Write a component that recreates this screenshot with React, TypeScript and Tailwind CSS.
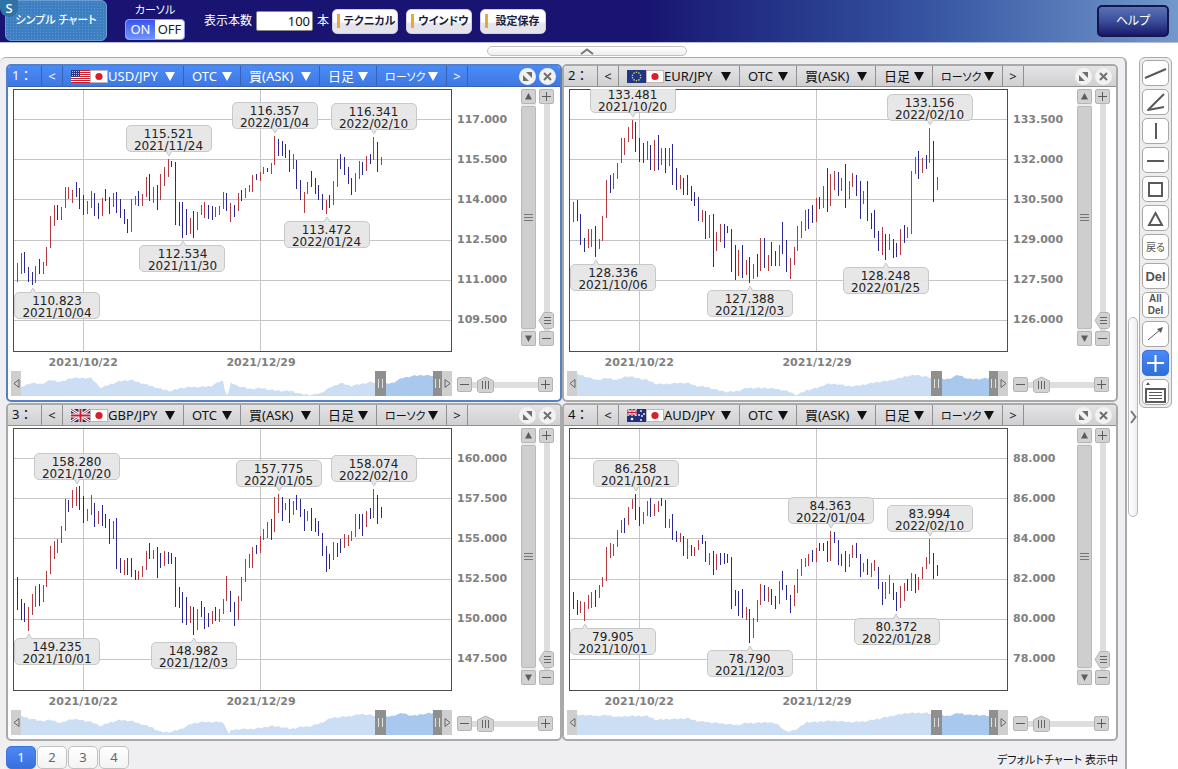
import { useState, type ReactNode } from "react";

type Candle = { up: boolean; top: number; bottom: number };
type Mark = { i: number; price: string; date: string; below?: boolean };

type Chart = {
  id: number;
  pair: string;
  flag: ReactNode;
  prices: string[];
  candles: Candle[];
  marks: Mark[];
  history: number[];
  dip?: number;
};

const PLOT_W = 439;
const PLOT_H = 263;
const GRID_Y = [30, 70, 110, 151, 191, 231];
const GRID_X = [70, 247];

// r = 陽線, b = 陰線。値は 1/3px 単位の高値・安値
function parse(src: string, origin: number): Candle[] {
  return src
    .trim()
    .split(/\s+/)
    .map((s) => {
      const [top, bottom] = s.slice(1).split("-").map(Number);
      return {
        up: s[0] === "r",
        top: Math.round((top - origin) / 3),
        bottom: Math.round((bottom - origin) / 3),
      };
    });
}

const candleX = (i: number) => Math.round(4 + i * 3.675);

const USD = `
r535-590 r503-568 b500-565 b547-592 b562-600 r542-595 b523-568 r532-568 r485-543 r392-490
r361-423 b361-405 r367-405 r307-370 r307-343 r314-354 b290-337 b310-373 b330-390 r349-387
r319-370 b325-393 b355-402 r338-392 b311-348 b336-386 r325-367 b322-385 b342-400 b371-418
b401-445 r343-442 r332-360 b319-362 r328-363 r277-336 b266-349 r305-355 b301-376 r268-346
r247-303 r223-276 b227-245 b232-420 b350-423 b352-460 b373-450 r398-447 b377-459 r380-436
r361-391 r350-398 b359-402 b362-404 r367-397 r364-391 r322-372 b325-378 r355-411 b361-397
r325-378 b314-348 r308-338 r301-320 r271-320 b268-286 r262-288 r247-268 b248-261 r235-267
r154-241 b163-214 b169-213 b178-220 b196-260 r208-252 b224-312 b286-344 r322-385 r292-328
b259-307 b280-328 b301-346 b328-376 r344-388 b331-370 r289-361 r223-307 b208-253 b217-271
b247-298 b280-330 r265-320 r229-283 b232-271 r214-259 b208-238 r157-226 b170-262 r217-241`;

const EUR = `
r352-411 b346-408 b388-480 b460-501 r433-490 r433-485 b424-516 r463-492 r392-468 r286-400
b269-325 r265-312 r235-283 r160-235 r160-210 r127-171 r106-163 b112-202 b160-230 b175-235
r169-226 b181-255 r166-259 b149-256 r188-241 b190-264 r190-244 b178-300 b248-315 r269-313
b280-330 b271-330 b304-349 b322-364 b337-408 r376-411 b379-462 r389-459 b386-546 r440-498
r416-471 b416-489 b422-445 b433-561 b481-586 r496-574 b481-580 r526-571 b517-594 r538-583
b508-577 r458-559 b458-550 r511-558 b472-543 b499-543 r479-543 b412-508 b466-561 r520-583
r485-540 r424-498 r407-460 r376-438 b371-432 b361-415 r340-412 b337-373 r302-370 b250-381
r268-364 r257-316 b262-333 r278-319 b238-370 r289-343 r265-307 b269-333 b289-403 r319-358
b289-409 b385-433 b376-459 b439-498 r427-511 b448-526 r446-495 b463-519 b475-517 r433-509
b421-475 r427-460 r259-448 r217-268 b199-283 r220-265 b211-253 r130-235 b169-352 r275-316`;

const GBP = `
b532-630 b598-661 b610-667 r622-694 r583-645 r559-622 b553-618 r556-606 r514-562 r439-522
r424-478 r418-460 r379-429 r298-393 b301-336 r269-323 r260-318 b259-330 b287-370 r328-364
r284-346 b308-381 r334-372 b314-378 b343-385 b358-432 r364-417 b355-508 b475-520 r481-526
b475-526 b475-531 b511-541 r514-541 r499-530 r454-511 b428-478 r451-478 b442-535 b460-504
r454-498 b455-492 b460-493 b472-621 b562-625 b577-670 b590-676 r619-670 b620-706 r628-690
b604-652 b620-687 b640-681 r632-672 b620-664 r628-666 r596-643 r529-603 b574-636 b607-678
r589-661 r532-604 r478-546 r463-504 r442-504 b436-462 r409-460 r386-421 r367-414 b358-420
r290-397 r283-339 b292-363 r308-330 b298-370 r304-346 b286-330 b298-352 b328-394 r334-363
b325-394 b355-397 b364-409 b400-468 b439-516 b463-508 r427-481 b430-472 b418-460 r401-444
r406-438 r394-424 r343-412 b343-388 b343-408 r334-382 b325-358 r268-355 b286-373 b322-355`;

const AUD = `
b577-628 b601-645 r604-640 r607-663 r586-628 r577-625 b571-621 r556-595 r532-562 r442-544
r428-474 r433-468 r391-441 r361-399 b355-400 r322-376 r298-327 b281-361 b322-378 r337-373
r302-348 b293-352 r313-349 r304-336 b293-319 b301-384 r358-385 b343-421 b394-426 r400-426
b409-469 r418-478 b436-469 r442-469 r421-451 b406-432 b422-487 r460-495 b454-525 r463-511
b460-495 b460-492 b463-490 b472-628 b571-619 b574-649 b568-655 r622-660 b628-730 r655-714
r601-667 r553-615 b556-603 r562-606 b568-615 b589-628 r544-613 b512-571 b556-600 b586-640
r556-619 r508-579 r478-528 r475-502 r463-499 b451-486 r443-487 b430-454 b430-454 b424-486
r394-483 b397-430 b421-495 b463-499 b454-517 r463-502 r436-475 b430-475 b463-532 r490-517
b478-526 r490-531 r479-513 b502-567 b547-616 r547-597 r526-583 b550-601 b577-633 r559-625
r549-603 b538-573 r520-573 b523-579 r532-571 r502-537 r472-508 r418-493 b460-538 b496-528`;

/* ---------- 国旗 ---------- */

const UsFlag = () => (
  <svg width="19" height="13" viewBox="0 0 19 13" aria-hidden="true">
    <rect width="19" height="13" fill="#fff" />
    {[0, 2, 4, 6, 8, 10, 12].map((y) => (
      <rect key={y} y={y} width="19" height="1" fill="#c8202f" />
    ))}
    <rect width="9" height="7" fill="#2b3a78" />
    {[1, 3, 5].map((y) =>
      [1, 3, 5, 7].map((x) => (
        <rect key={`${x}${y}`} x={x} y={y} width="1" height="1" fill="#b9c0dc" />
      ))
    )}
  </svg>
);

const EuFlag = () => (
  <svg width="19" height="13" viewBox="0 0 19 13" aria-hidden="true">
    <rect width="19" height="13" fill="#1f3683" />
    {Array.from({ length: 10 }, (_, i) => (
      <circle
        key={i}
        cx={9.5 + 4.2 * Math.sin((i * Math.PI) / 5)}
        cy={6.5 - 4.2 * Math.cos((i * Math.PI) / 5)}
        r="0.8"
        fill="#e8dc6a"
      />
    ))}
  </svg>
);

const Union = () => (
  <>
    <rect width="19" height="13" fill="#28306e" />
    <path d="M0 0L19 13M19 0L0 13" stroke="#fff" strokeWidth="3" />
    <path d="M0 0L19 13M19 0L0 13" stroke="#c8202f" strokeWidth="1" />
    <path d="M9.5 0V13M0 6.5H19" stroke="#fff" strokeWidth="4" />
    <path d="M9.5 0V13M0 6.5H19" stroke="#c8202f" strokeWidth="2" />
  </>
);

const GbFlag = () => (
  <svg width="19" height="13" viewBox="0 0 19 13" aria-hidden="true">
    <Union />
  </svg>
);

const AuFlag = () => (
  <svg width="19" height="13" viewBox="0 0 19 13" aria-hidden="true">
    <rect width="19" height="13" fill="#20307c" />
    <svg width="10" height="7" viewBox="0 0 19 13" preserveAspectRatio="none">
      <Union />
    </svg>
    <circle cx="5" cy="10" r="1.3" fill="#fff" />
    {[
      [14, 2],
      [12, 6],
      [17, 5],
      [14, 11],
      [15, 7],
    ].map(([x, y]) => (
      <circle key={`${x}-${y}`} cx={x} cy={y} r="0.9" fill="#fff" />
    ))}
  </svg>
);

const JpFlag = () => (
  <svg width="18" height="13" viewBox="0 0 18 13" aria-hidden="true">
    <rect x="0.5" y="0.5" width="17" height="12" fill="#fff" stroke="#c4b4b4" />
    <circle cx="9" cy="6.5" r="3.6" fill="#d81f2a" />
  </svg>
);

const CHARTS: Chart[] = [
  {
    id: 1,
    pair: "USD/JPY",
    flag: <UsFlag />,
    prices: ["117.000", "115.500", "114.000", "112.500", "111.000", "109.500"],
    candles: parse(USD, 12),
    marks: [
      { i: 4, price: "110.823", date: "2021/10/04", below: true },
      { i: 41, price: "115.521", date: "2021/11/24" },
      { i: 45, price: "112.534", date: "2021/11/30", below: true },
      { i: 70, price: "116.357", date: "2022/01/04" },
      { i: 84, price: "113.472", date: "2022/01/24", below: true },
      { i: 97, price: "116.341", date: "2022/02/10" },
    ],
    history: [
      16, 12, 13, 9, 11, 7, 7, 7, 17, 13, 10, 9, 12, 15, 18, 20, 17, 16, 16, 15, 10, 12, 16, 18,
      17, 19, 20, 20, 23, 24, 22, 16, 12, 15, 13, 11, 13, 12, 7, 5, 4, 5,
    ],
    dip: 206,
  },
  {
    id: 2,
    pair: "EUR/JPY",
    flag: <EuFlag />,
    prices: ["133.500", "132.000", "130.500", "129.000", "127.500", "126.000"],
    candles: parse(EUR, 12),
    marks: [
      { i: 6, price: "128.336", date: "2021/10/06", below: true },
      { i: 16, price: "133.481", date: "2021/10/20" },
      { i: 48, price: "127.388", date: "2021/12/03", below: true },
      { i: 85, price: "128.248", date: "2022/01/25", below: true },
      { i: 97, price: "133.156", date: "2022/02/10" },
    ],
    history: [
      3, 6, 9, 7, 9, 5, 7, 9, 13, 13, 12, 12, 15, 16, 19, 21, 20, 17, 17, 17, 18, 20, 24, 19, 17,
      13, 13, 15, 15, 13, 11, 10, 8, 5, 4, 6, 8, 8, 4, 8, 8, 7,
    ],
  },
  {
    id: 3,
    pair: "GBP/JPY",
    flag: <GbFlag />,
    prices: ["160.000", "157.500", "155.000", "152.500", "150.000", "147.500"],
    candles: parse(GBP, 84),
    marks: [
      { i: 3, price: "149.235", date: "2021/10/01", below: true },
      { i: 16, price: "158.280", date: "2021/10/20" },
      { i: 48, price: "148.982", date: "2021/12/03", below: true },
      { i: 71, price: "157.775", date: "2022/01/05" },
      { i: 97, price: "158.074", date: "2022/02/10" },
    ],
    history: [
      6, 9, 11, 10, 13, 9, 10, 12, 16, 12, 10, 11, 14, 17, 22, 22, 19, 14, 12, 12, 12, 20, 19, 19,
      18, 16, 17, 19, 17, 16, 13, 8, 7, 6, 4, 5, 7, 6, 3, 6, 4, 3,
    ],
    dip: 208,
  },
  {
    id: 4,
    pair: "AUD/JPY",
    flag: <AuFlag />,
    prices: ["88.000", "86.000", "84.000", "82.000", "80.000", "78.000"],
    candles: parse(AUD, 84),
    marks: [
      { i: 3, price: "79.905", date: "2021/10/01", below: true },
      { i: 17, price: "86.258", date: "2021/10/21" },
      { i: 48, price: "78.790", date: "2021/12/03", below: true },
      { i: 70, price: "84.363", date: "2022/01/04" },
      { i: 88, price: "80.372", date: "2022/01/28", below: true },
      { i: 97, price: "83.994", date: "2022/02/10" },
    ],
    history: [
      5, 5, 6, 5, 7, 6, 6, 6, 10, 9, 9, 8, 11, 12, 13, 14, 15, 13, 13, 12, 14, 22, 19, 12, 12, 11,
      11, 12, 12, 11, 9, 7, 5, 3, 3, 3, 5, 6, 3, 5, 5, 6,
    ],
  },
];

function areaPoints(history: number[], from: number, to: number, dip?: number) {
  const pts = [`0,25`];
  for (let x = from; x <= to; x += 2) {
    const k = Math.min(history.length - 2, Math.floor(x / 10));
    const t = x / 10 - k;
    let y = history[k] * (1 - t) + history[k + 1] * t;
    y += (((x * 13) % 7) - 3) / 4;
    if (dip && Math.abs(x - dip) < 3) y = 24 - Math.abs(x - dip) * 2;
    pts.push(`${x - from},${y.toFixed(1)}`);
  }
  pts.push(`${to - from},25`);
  return pts.join(" ");
}

function Plot({ chart }: { chart: Chart }) {
  return (
    <div className="relative h-[263px] overflow-hidden bg-white">
      <svg
        className="block h-full w-full"
        viewBox={`0 0 ${PLOT_W} ${PLOT_H}`}
        preserveAspectRatio="none"
        shapeRendering="crispEdges"
        aria-hidden="true"
      >
        {GRID_Y.map((y) => (
          <rect key={y} y={y} width={PLOT_W} height="1" fill="#c6c6c6" />
        ))}
        {GRID_X.map((x) => (
          <rect key={x} x={x} width="1" height={PLOT_H} fill="#c6c6c6" />
        ))}
        {chart.candles.map((c, i) => (
          <rect
            key={i}
            x={candleX(i)}
            y={c.top}
            width="1"
            height={c.bottom - c.top}
            fill={c.up ? "#b23a40" : "#2c2890"}
          />
        ))}
        <rect x="0.5" y="0.5" width={PLOT_W - 1} height={PLOT_H - 1} fill="none" stroke="#4c4c4c" />
      </svg>
      {chart.marks.map((m) => {
        const c = chart.candles[m.i];
        const left = `${((candleX(m.i) + 0.5) / PLOT_W) * 100}%`;
        return (
          <div key={m.date}>
            <div
              className="absolute h-[27px] w-[86px] rounded-[5px] border border-[#c8c8c8] bg-[#e6e6e6]/95 pt-0.5 text-center font-['DejaVu_Sans',sans-serif] text-[12px] leading-[12px] text-[#222]"
              style={{
                left: `max(1px, calc(${left} - 43px))`,
                top: m.below ? c.bottom + 7 : c.top - 34,
              }}
            >
              {m.price}
              <br />
              {m.date}
            </div>
            <svg
              className="absolute -ml-1 block"
              width="8"
              height="6"
              viewBox="0 0 8 6"
              style={{ left, top: m.below ? c.bottom + 2 : c.top - 8 }}
              aria-hidden="true"
            >
              <path
                d={m.below ? "M1 6L4 1L7 6" : "M1 0L4 5L7 0"}
                fill="#e6e6e6"
                stroke="#c8c8c8"
              />
            </svg>
          </div>
        );
      })}
    </div>
  );
}

function StepButton({ label, children }: { label: string; children: ReactNode }) {
  return (
    <button
      aria-label={label}
      className="flex h-[15px] w-[15px] shrink-0 items-center justify-center rounded-[2px] border border-[#b4b4b4] bg-[#d2d2d2]"
    >
      <svg width="13" height="13" viewBox="0 0 13 13" stroke="#5c5c5c" fill="#5c5c5c" aria-hidden="true">
        {children}
      </svg>
    </button>
  );
}

const plus = <path d="M2 6.5H11M6.5 2V11" fill="none" />;
const minus = <path d="M2 6.5H11" fill="none" />;

function ScrollColumn() {
  return (
    <div className="flex h-[257px] flex-col gap-0.5 bg-[#ececec]">
      <StepButton label="上へ">
        <path d="M6.5 3L10 9.5H3Z" stroke="none" />
      </StepButton>
      <div className="flex w-[15px] flex-1 items-center justify-center rounded-[2px] border border-[#bababa] bg-[#cecece]">
        <svg width="9" height="8" viewBox="0 0 9 8" stroke="#777" aria-hidden="true">
          <path d="M0 0.5H9M0 3.5H9M0 6.5H9" />
        </svg>
      </div>
      <StepButton label="下へ">
        <path d="M6.5 10L10 3.5H3Z" stroke="none" />
      </StepButton>
    </div>
  );
}

function ZoomColumn() {
  return (
    <div className="flex h-[257px] flex-col items-center">
      <StepButton label="縦に拡大">{plus}</StepButton>
      <div className="relative flex w-[17px] flex-1 flex-col items-center justify-end pb-0.5">
        <div className="absolute inset-y-0 w-[6px] bg-[#dedede]" />
        <svg className="relative" width="17" height="17" viewBox="0 0 17 17" aria-hidden="true">
          <path d="M6 0.5H14L15.5 2V15L14 16.5H6L1 8.5Z" fill="#d2d2d2" stroke="#b4b4b4" />
          <path d="M6 5.5H13M6 8.5H13M6 11.5H13" stroke="#666" />
        </svg>
        <input
          type="range"
          aria-label="縦の倍率"
          defaultValue={0}
          className="absolute inset-0 h-full w-full opacity-0 [writing-mode:vertical-lr]"
        />
      </div>
      <StepButton label="縦に縮小">{minus}</StepButton>
    </div>
  );
}

function WidthSlider() {
  return (
    <div className="ml-[5px] flex w-[98px] items-center pt-0.5 pr-0.5">
      <StepButton label="横に縮小">{minus}</StepButton>
      <div className="relative flex h-[17px] flex-1 items-center pl-[5px]">
        <div className="absolute inset-x-0 h-[6px] bg-[#dedede]" />
        <svg className="relative" width="17" height="17" viewBox="0 0 17 17" aria-hidden="true">
          <path d="M0.5 5L8.5 1L16.5 5V15L15 16.5H2L0.5 15Z" fill="#d2d2d2" stroke="#b4b4b4" />
          <path d="M5.5 5V13M8.5 5V13M11.5 5V13" stroke="#666" />
        </svg>
        <input
          type="range"
          aria-label="横の倍率"
          defaultValue={20}
          className="absolute inset-0 w-full opacity-0"
        />
      </div>
      <StepButton label="横に拡大">{plus}</StepButton>
    </div>
  );
}

function Grip({ wide }: { wide?: boolean }) {
  return (
    <div
      className={`flex h-full shrink-0 items-center justify-center bg-[#8f8f8f] ${
        wide ? "w-[11px]" : "w-[9px]"
      }`}
    >
      <svg width="5" height="9" viewBox="0 0 5 9" stroke="#e0e0e0" aria-hidden="true">
        <path d="M0.5 0V9M4.5 0V9" />
      </svg>
    </div>
  );
}

function Navigator({ chart }: { chart: Chart }) {
  return (
    <div className="flex h-[25px] flex-1">
      <button
        aria-label="前へ"
        className="flex w-[10px] shrink-0 items-center justify-center bg-[#cfcfcf]"
      >
        <svg width="7" height="9" viewBox="0 0 7 9" aria-hidden="true">
          <path d="M6 0.5V8.5L1 4.5Z" fill="none" stroke="#666" />
        </svg>
      </button>
      <svg
        className="block h-full min-w-0 flex-[354]"
        viewBox="0 0 354 25"
        preserveAspectRatio="none"
        aria-hidden="true"
      >
        <polygon points={areaPoints(chart.history, 0, 354, chart.dip)} fill="#cbdef4" />
      </svg>
      <Grip wide />
      <svg
        className="block h-full min-w-0 flex-[47]"
        viewBox="0 0 46 25"
        preserveAspectRatio="none"
        aria-hidden="true"
      >
        <polygon points={areaPoints(chart.history, 364, 410)} fill="#a8c8ee" />
      </svg>
      <Grip />
      <button
        aria-label="次へ"
        className="flex w-[10px] shrink-0 items-center justify-center bg-[#cfcfcf]"
      >
        <svg width="7" height="9" viewBox="0 0 7 9" aria-hidden="true">
          <path d="M1 0.5V8.5L6 4.5Z" fill="none" stroke="#666" />
        </svg>
      </button>
    </div>
  );
}

function Picker({
  label,
  value,
  width,
  small,
  children,
}: {
  label: string;
  value: string;
  width: string;
  small?: boolean;
  children?: ReactNode;
}) {
  return (
    <label className={`flex h-full shrink-0 items-center border-r border-inherit pr-2 pl-2 ${width}`}>
      {children}
      <select
        aria-label={label}
        defaultValue={value}
        className={`h-full min-w-0 flex-1 appearance-none bg-transparent leading-none outline-none ${
          small ? "text-[11px]" : "text-[13px]"
        }`}
      >
        <option>{value}</option>
      </select>
      <svg width="10" height="9" viewBox="0 0 10 9" fill="currentColor" aria-hidden="true">
        <path d="M0 0H10L5 9Z" />
      </svg>
    </label>
  );
}

function RoundButton({ label, children }: { label: string; children: ReactNode }) {
  return (
    <button aria-label={label} className="flex h-[17px] w-[17px] items-center justify-center rounded-full bg-[#f2f2f2]">
      <svg width="11" height="11" viewBox="0 0 11 11" aria-hidden="true">
        {children}
      </svg>
    </button>
  );
}

function ChartPanel({ chart, active, onSelect }: { chart: Chart; active: boolean; onSelect: () => void }) {
  return (
    <section
      onClick={onSelect}
      className={`min-w-0 overflow-hidden rounded-[5px] border-2 bg-white ${
        active ? "border-[#5580c4]" : "border-[#a8a9a9]"
      }`}
    >
      <div
        className={`flex h-[21px] items-center border-b ${
          active
            ? "border-[#3a62b4] bg-linear-to-b from-[#4a8bf8] to-[#3f78e2] text-white"
            : "border-[#909090] bg-linear-to-b from-[#e4e3e5] to-[#d0cfd1] text-[#111]"
        }`}
      >
        <span className="flex h-full w-[34px] shrink-0 items-center border-r border-inherit pl-1 text-[13px] [font-feature-settings:normal]">
          {chart.id}：
        </span>
        <button aria-label="前の通貨" className="h-full w-[21px] shrink-0 border-r border-inherit text-[13px] leading-none">
          &lt;
        </button>
        <Picker label="通貨ペア" value={chart.pair} width="w-[121px]">
          {chart.flag}
          <JpFlag />
        </Picker>
        <Picker label="取引種別" value="OTC" width="w-[57px]" />
        <Picker label="売買" value="買(ASK)" width="w-[79px]" />
        <Picker label="足種" value="日足" width="w-[57px]" />
        <Picker label="チャート種別" value="ローソク" width="w-[70px]" small />
        <button aria-label="次の通貨" className="h-full w-[21px] shrink-0 border-r border-inherit text-[13px] leading-none">
          &gt;
        </button>
        <div className="flex flex-1 justify-end gap-[3px] pr-1">
          <RoundButton label="最大化">
            <path d="M4 1H10V7ZM1 4V10H7Z" fill="#707070" />
          </RoundButton>
          <RoundButton label="閉じる">
            <path d="M2 2L9 9M9 2L2 9" stroke="#707070" strokeWidth="2" />
          </RoundButton>
        </div>
      </div>

      <div className="pt-0.5 pr-[5px] pb-1 pl-[5px] font-['DejaVu_Sans',sans-serif] text-[11px] font-bold text-[#808080]">
        <div className="flex">
          <div className="min-w-0 flex-1">
            <div className="font-normal">
              <Plot chart={chart} />
            </div>
            <div className="flex h-[19px] items-center pt-1 text-center">
              <span className="w-[32%]">2021/10/22</span>
              <span className="w-[49%]">2021/12/29</span>
            </div>
          </div>
          <ul className="w-[69px] pt-[11px] pl-[5px]">
            {chart.prices.map((p) => (
              <li key={p} className="flex h-10 items-center">
                {p}
              </li>
            ))}
          </ul>
          <div className="flex gap-0.5">
            <ScrollColumn />
            <ZoomColumn />
          </div>
        </div>
        <div className="-ml-0.5 flex">
          <Navigator chart={chart} />
          <WidthSlider />
        </div>
      </div>
    </section>
  );
}

/* ---------- 描画ツール ---------- */

const svg = (children: ReactNode) => (
  <svg width="25" height="24" viewBox="1 1 25 24" fill="none" stroke="#5a5a5a" strokeWidth="2" aria-hidden="true">
    {children}
  </svg>
);

const TOOLS: { name: string; icon: ReactNode }[] = [
  { name: "トレンドライン", icon: svg(<path d="M3 18L24 9" />) },
  { name: "角度線", icon: svg(<path d="M22 5L6 21L22 18" strokeLinejoin="round" />) },
  { name: "垂直線", icon: svg(<path d="M14 5V21" />) },
  { name: "水平線", icon: svg(<path d="M5 14H22" />) },
  { name: "四角形", icon: svg(<path d="M7 7H20V20H7Z" />) },
  { name: "三角形", icon: svg(<path d="M13.5 8L20 20H7Z" />) },
  { name: "戻る", icon: <span className="text-[10px] text-[#555]">戻る</span> },
  {
    name: "削除",
    icon: (
      <span className="font-['Liberation_Sans_Narrow','Liberation_Sans',sans-serif] text-[13px] leading-none font-bold text-[#555]">
        Del
      </span>
    ),
  },
  {
    name: "すべて削除",
    icon: (
      <span className="flex flex-col font-['Liberation_Sans_Narrow','Liberation_Sans',sans-serif] text-[10px] leading-[12px] font-bold text-[#555]">
        <span>All</span>
        <span>Del</span>
      </span>
    ),
  },
  {
    name: "矢印",
    icon: svg(
      <>
        <path d="M6 19L19 8" strokeWidth="1" />
        <path d="M21 6L15 8L19 12Z" fill="#5a5a5a" stroke="none" />
      </>
    ),
  },
  { name: "十字カーソル", icon: svg(<path d="M5 13H22M13.5 5V22" stroke="#fff" />) },
  {
    name: "データ表示",
    icon: svg(
      <>
        <path d="M6 3L8 6H4Z" fill="#5a5a5a" stroke="none" />
        <path d="M4 10H23V23H4Z" strokeWidth="2" />
        <path d="M7 13.5H20M7 16.5H20M7 19.5H20" strokeWidth="1" />
      </>
    ),
  },
];

function HeaderButton({ children }: { children: ReactNode }) {
  return (
    <button className="flex h-[25px] w-[66px] items-center gap-[2px] rounded-[5px] border border-[#cfd0dc] bg-linear-to-b from-white from-50% to-[#e4e4ea] to-60% pl-1 text-[11px] font-bold whitespace-nowrap text-[#1c1c3c]">
      <span className="h-[14px] w-[3px] shrink-0 bg-[#e8a83c]" />
      <span className="flex-1 text-center">{children}</span>
    </button>
  );
}

export default function App() {
  const [active, setActive] = useState(1);
  const [page, setPage] = useState(1);
  const [tool, setTool] = useState("十字カーソル");
  const [cursor, setCursor] = useState(true);

  return (
    <div className="flex min-h-screen flex-col bg-white font-['Noto_Sans','Noto_Sans_CJK_JP',sans-serif] text-[#111] [font-feature-settings:'palt']">
      {/* ヘッダー */}
      <header className="flex h-[43px] items-center border-b border-[#b8bcd4] bg-linear-to-r from-[#191471] from-55% via-[#3552a0] via-78% to-[#7299cb] pr-[9px] text-white">
        <div className="relative ml-[5px] flex h-[41px] w-[102px] shrink-0 items-center justify-center self-start rounded-[6px] border border-[#6d9dd0] bg-[#3d7fc0] bg-[radial-gradient(#5797d4_1px,transparent_1px)] bg-[length:3px_3px] text-[11px] font-medium whitespace-nowrap">
          シンプル チャート
          <span className="absolute -top-px -left-[6px] flex h-[17px] w-[18px] items-center justify-center rounded-b-full bg-[#2e73a6] text-[13px] leading-[17px]">
            S
          </span>
        </div>

        <div className="ml-[18px] flex shrink-0 flex-col items-center text-[11px]">
          <span className="h-[16px] leading-[14px]">カーソル</span>
          <div className="flex h-[21px] w-[60px] overflow-hidden rounded-[4px] border border-[#8f9cf0] bg-white text-[13px] leading-[19px]">
            <button
              onClick={() => setCursor(true)}
              className={cursor ? "w-1/2 bg-linear-to-b from-[#3d52f0] to-[#6f93ff] text-white" : "w-1/2 text-[#222]"}
            >
              ON
            </button>
            <button
              onClick={() => setCursor(false)}
              className={cursor ? "w-1/2 text-[#222]" : "w-1/2 bg-linear-to-b from-[#3d52f0] to-[#6f93ff] text-white"}
            >
              OFF
            </button>
          </div>
        </div>

        <label className="ml-[19px] flex shrink-0 items-center gap-1 text-[12px] whitespace-nowrap">
          表示本数
          <input
            type="text"
            defaultValue="100"
            className="h-[20px] w-[57px] rounded-[2px] border border-[#888] bg-white pr-0.5 text-right text-[13px] text-[#111]"
          />
          本
        </label>

        <div className="ml-[3px] flex shrink-0 gap-2">
          <HeaderButton>テクニカル</HeaderButton>
          <HeaderButton>ウインドウ</HeaderButton>
          <HeaderButton>設定保存</HeaderButton>
        </div>

        <button className="ml-auto h-[32px] w-[72px] rounded-[5px] border-2 border-[#15154f] bg-linear-to-b from-[#5a73b4] via-[#3b4e9a] to-[#1b1a6a] text-[12px]">
          ヘルプ
        </button>
      </header>

      <div className="flex h-[14px] shrink-0 justify-center pt-[3px] pr-1">
        <button
          aria-label="ヘッダーを隠す"
          className="flex h-[10px] w-[200px] items-center justify-center rounded-[5px] border border-[#c0c0c0] bg-linear-to-b from-white to-[#eee]"
        >
          <svg width="14" height="7" viewBox="0 0 14 7" fill="none" stroke="#777" strokeWidth="2" aria-hidden="true">
            <path d="M1 6L7 1.5L13 6" />
          </svg>
        </button>
      </div>

      <div className="flex flex-1">
        <main className="flex min-w-0 flex-1 flex-col rounded-t-[6px] border-t border-r-2 border-[#a9a9ad] bg-[#efeff1] pt-[6px] pr-[7px] pl-[6px]">
          <div className="grid grid-cols-2 gap-y-px">
            {CHARTS.map((c) => (
              <ChartPanel key={c.id} chart={c} active={active === c.id} onSelect={() => setActive(c.id)} />
            ))}
          </div>
          <footer className="flex items-center justify-between pt-[5px]">
            <nav className="flex gap-px" aria-label="ページ">
              {[1, 2, 3, 4].map((n) => (
                <button
                  key={n}
                  onClick={() => setPage(n)}
                  className={`h-[23px] w-[30px] rounded-[5px] border text-[13px] leading-none ${
                    page === n
                      ? "border-[#3f74dc] bg-linear-to-b from-[#4a88f6] to-[#3a70dc] text-white"
                      : "border-[#c0c0c0] bg-linear-to-b from-white to-[#f3f3f3] text-[#666]"
                  }`}
                >
                  {n}
                </button>
              ))}
            </nav>
            <p className="pt-1 text-[11px] leading-[18px] whitespace-nowrap">デフォルトチャート 表示中</p>
          </footer>
        </main>

        <div className="flex w-[12px] shrink-0 flex-col items-center justify-center pt-2">
          <button
            aria-label="ツールを隠す"
            className="flex h-[200px] w-[10px] items-center justify-center rounded-[5px] border border-[#b8b8b8] bg-linear-to-r from-white to-[#eee]"
          >
            <svg width="7" height="14" viewBox="0 0 7 14" fill="none" stroke="#777" strokeWidth="2" aria-hidden="true">
              <path d="M1 1L5.5 7L1 13" />
            </svg>
          </button>
        </div>

        <div className="mr-[6px] flex w-[33px] shrink-0 flex-col gap-[3px] self-start rounded-[6px] border border-[#ababab] bg-[#ededee] p-[2px]">
          {TOOLS.map((t) => (
            <button
              key={t.name}
              aria-label={t.name}
              onClick={() => setTool(t.name)}
              className={`flex h-[26px] w-[27px] items-center justify-center overflow-hidden rounded-[5px] border ${
                tool === t.name
                  ? "border-[#3a70d8] bg-linear-to-b from-[#4a8af8] to-[#2f6fd8]"
                  : "border-[#a8a8a8] bg-white"
              }`}
            >
              {t.icon}
            </button>
          ))}
        </div>
      </div>
    </div>
  );
}
